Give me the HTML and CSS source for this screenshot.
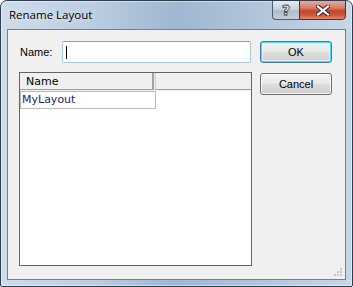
FILE: index.html
```html
<!DOCTYPE html>
<html lang="en">
<head>
  <meta charset="UTF-8">
  <title>Rename Layout</title>
  <link rel="stylesheet" href="styles.css">
</head>
<body>
  <div class="window">
    <div class="titlebar">
      <span class="title">Rename Layout</span>
      <div class="caption-buttons">
        <div class="cap-btn help">?</div>
        <div class="cap-btn close">
          <svg width="14" height="11" viewBox="0 0 14 11">
            <path d="M2 1.5 L12 9.5 M12 1.5 L2 9.5" stroke="#3b2a28" stroke-width="4.2" stroke-linecap="square"/>
            <path d="M2 1.5 L12 9.5 M12 1.5 L2 9.5" stroke="#ffffff" stroke-width="2.2" stroke-linecap="square"/>
          </svg>
        </div>
      </div>
    </div>

    <div class="client">
      <div class="left-col">
        <div class="name-row">
          <label class="name-label" for="layoutName">Name:</label>
          <div class="name-input" id="layoutName"><span class="caret"></span></div>
        </div>

        <div class="list">
          <div class="list-header">
            <div class="header-cell">Name</div>
            <div class="header-rest"></div>
          </div>
          <div class="list-row">
            <div class="list-cell">MyLayout</div>
          </div>
        </div>
      </div>

      <div class="buttons">
        <button class="btn default">OK</button>
        <button class="btn">Cancel</button>
      </div>

      <svg class="grip" width="10" height="10" viewBox="0 0 10 10">
        <rect x="7" y="1" width="2" height="2" fill="#c5c5c5"/>
        <rect x="4" y="4" width="2" height="2" fill="#c5c5c5"/>
        <rect x="7" y="4" width="2" height="2" fill="#c5c5c5"/>
        <rect x="1" y="7" width="2" height="2" fill="#c5c5c5"/>
        <rect x="4" y="7" width="2" height="2" fill="#c5c5c5"/>
        <rect x="7" y="7" width="2" height="2" fill="#c5c5c5"/>
      </svg>
    </div>
  </div>
</body>
</html>
```

FILE: styles.css
```css
body {
  margin: 0;
  padding: 0;
  background: #ffffff;
}

.window {
  width: 353px;
  height: 287px;
  box-sizing: border-box;
  border: 1px solid #2f3d4d;
  border-radius: 7px 7px 2px 2px;
  padding: 0 6px 6px 6px;
  display: flex;
  flex-direction: column;
  background: linear-gradient(90deg, #cedcec 0%, #bccee2 25%, #9fb7d1 50%, #b2c6dc 75%, #c6d7e9 100%);
  box-shadow: inset 0 0 0 1px rgba(255, 255, 255, 0.45);
  overflow: hidden;
}

.titlebar {
  height: 28px;
  display: flex;
  justify-content: space-between;
  align-items: flex-start;
}

.title {
  font-family: "Open Sans", "Noto Sans", sans-serif;
  font-size: 11.5px;
  color: #000;
  padding: 6px 0 0 2px;
  text-shadow: 0 0 6px rgba(255, 255, 255, 0.8);
}

.caption-buttons {
  display: flex;
  margin-top: -1px;
}

.cap-btn {
  height: 20px;
  box-sizing: border-box;
  border: 1px solid #4e5d6e;
  display: flex;
  align-items: center;
  justify-content: center;
}

.cap-btn.help {
  width: 27px;
  border-right: none;
  border-radius: 0 0 0 4px;
  background: linear-gradient(180deg, #e4eaf1 0%, #c9d4e0 45%, #aebccc 55%, #c2cfdc 100%);
  font-family: "DejaVu Sans", sans-serif;
  font-weight: bold;
  font-size: 14px;
  color: #fff;
  -webkit-text-stroke: 0.8px #3a4656;
  text-shadow: 0 0 1px #3a4656;
}

.cap-btn.close {
  width: 47px;
  border-color: #5b2c22;
  border-radius: 0 0 4px 0;
  background: linear-gradient(180deg, #e8ab9c 0%, #d77a62 40%, #c2432a 55%, #cd5a40 80%, #e08d73 100%);
}

.client {
  position: relative;
  flex: 1;
  border: 1px solid #6f8197;
  background: #f0f0f0;
  padding: 11px 13px 13px 11px;
  display: grid;
  grid-template-columns: 233px 72px;
  column-gap: 8px;
}

.left-col {
  display: flex;
  flex-direction: column;
}

.name-row {
  display: flex;
  align-items: center;
  height: 22px;
}

.name-label {
  width: 43px;
  padding-left: 1px;
  box-sizing: border-box;
  font-family: "Liberation Sans", Arial, sans-serif;
  font-size: 11px;
  color: #000;
}

.name-input {
  width: 189px;
  height: 22px;
  box-sizing: border-box;
  border: 1px solid #a8c8e4;
  border-top-color: #7fa4c6;
  border-radius: 2px;
  background: #fff;
  display: flex;
  align-items: center;
  padding-left: 3px;
}

.caret {
  width: 1px;
  height: 13px;
  background: #000;
}

.list {
  margin-top: 9px;
  height: 194px;
  box-sizing: border-box;
  border: 1px solid #646464;
  background: #fff;
  font-family: "DejaVu Sans", Verdana, sans-serif;
  font-size: 11px;
}

.list-header {
  display: flex;
  height: 17px;
  background: #f0f0f0;
  border-bottom: 1px solid #f0f0f0;
}

.header-cell {
  width: 134px;
  box-sizing: border-box;
  border-right: 2px solid #a0a0a0;
  border-bottom: 1px solid #a0a0a0;
  padding: 2px 0 0 6px;
  color: #000;
}

.header-rest {
  flex: 1;
  margin-left: 1px;
  border-left: 1px solid #d0d0d0;
  border-bottom: 1px solid #a0a0a0;
}

.list-row {
  display: flex;
}

.list-cell {
  width: 136px;
  height: 18px;
  box-sizing: border-box;
  border: 1px solid #bcbcbc;
  padding: 1px 0 0 1px;
  color: #2b1c6a;
}

.buttons {
  display: flex;
  flex-direction: column;
  gap: 10px;
}

.btn {
  width: 72px;
  height: 22px;
  box-sizing: border-box;
  border: 1px solid #707070;
  border-radius: 3px;
  background: linear-gradient(180deg, #f2f2f2 0%, #ebebeb 45%, #dddddd 50%, #cfcfcf 100%);
  box-shadow: inset 0 0 0 1px rgba(255, 255, 255, 0.7);
  font-family: "Liberation Sans", Arial, sans-serif;
  font-size: 11px;
  color: #000;
  padding: 0;
}

.btn.default {
  border-color: #3c7fb1;
  box-shadow: inset 0 0 0 1px #48d8fb, inset 0 0 0 2px rgba(255, 255, 255, 0.6);
}

.grip {
  position: absolute;
  right: 2px;
  bottom: 2px;
}
```
